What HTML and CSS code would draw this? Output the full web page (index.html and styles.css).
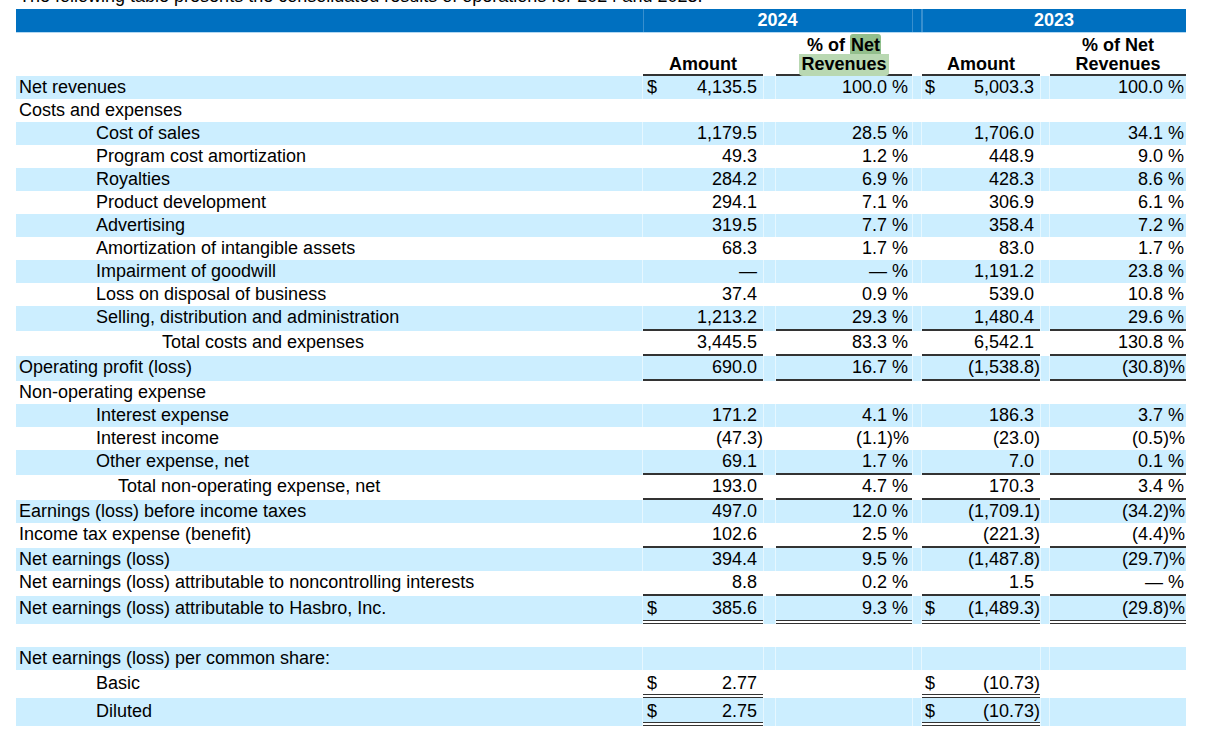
FILE: index.html
```html
<!DOCTYPE html>
<html lang="en">
<head>
<meta charset="utf-8">
<title>Consolidated results of operations</title>
<link rel="stylesheet" href="styles.css">
</head>
<body>
<div class="page">
  <p class="intro">The following table presents the consolidated results of operations for 2024 and 2023.</p>
  <table class="fin">
    <colgroup>
      <col class="w-label"><col class="w-cur1"><col class="w-amt1"><col class="w-rp"><col class="w-gap1"><col class="w-pv1"><col class="w-ps1"><col class="w-gap2"><col class="w-cur2"><col class="w-amt2"><col class="w-rp"><col class="w-gap2"><col class="w-pv2"><col class="w-ps2">
    </colgroup>
    <thead>
      <tr class="yr">
        <th class="lb"></th>
        <th colspan="6" class="yl">2024</th>
        <th class="g"></th>
        <th colspan="6" class="yl">2023</th>
      </tr>
      <tr class="hd">
        <th class="lb"></th>
        <th colspan="3" class="ub">Amount</th>
        <th class="g"></th>
        <th colspan="2" class="ub">% of <span class="hl-a">Net</span><br><span class="hl-b">Revenues</span></th>
        <th class="g"></th>
        <th colspan="3" class="ub">Amount</th>
        <th class="g"></th>
        <th colspan="2" class="ub">% of Net<br>Revenues</th>
      </tr>
    </thead>
    <tbody>
      <tr class="alt"><td class="lb">Net revenues</td><td class="cur">$</td><td class="amt">4,135.5</td><td class="rp"></td><td class="g"></td><td class="pv">100.0</td><td class="ps">&nbsp;%</td><td class="g"></td><td class="cur c2">$</td><td class="amt">5,003.3</td><td class="rp"></td><td class="g"></td><td class="pv">100.0</td><td class="ps">&nbsp;%</td></tr>
      <tr><td class="lb">Costs and expenses</td><td class="cur"></td><td class="amt"></td><td class="rp"></td><td class="g"></td><td class="pv"></td><td class="ps"></td><td class="g"></td><td class="cur c2"></td><td class="amt"></td><td class="rp"></td><td class="g"></td><td class="pv"></td><td class="ps"></td></tr>
      <tr class="alt"><td class="lb i1">Cost of sales</td><td class="cur"></td><td class="amt">1,179.5</td><td class="rp"></td><td class="g"></td><td class="pv">28.5</td><td class="ps">&nbsp;%</td><td class="g"></td><td class="cur c2"></td><td class="amt">1,706.0</td><td class="rp"></td><td class="g"></td><td class="pv">34.1</td><td class="ps">&nbsp;%</td></tr>
      <tr><td class="lb i1">Program cost amortization</td><td class="cur"></td><td class="amt">49.3</td><td class="rp"></td><td class="g"></td><td class="pv">1.2</td><td class="ps">&nbsp;%</td><td class="g"></td><td class="cur c2"></td><td class="amt">448.9</td><td class="rp"></td><td class="g"></td><td class="pv">9.0</td><td class="ps">&nbsp;%</td></tr>
      <tr class="alt"><td class="lb i1">Royalties</td><td class="cur"></td><td class="amt">284.2</td><td class="rp"></td><td class="g"></td><td class="pv">6.9</td><td class="ps">&nbsp;%</td><td class="g"></td><td class="cur c2"></td><td class="amt">428.3</td><td class="rp"></td><td class="g"></td><td class="pv">8.6</td><td class="ps">&nbsp;%</td></tr>
      <tr><td class="lb i1">Product development</td><td class="cur"></td><td class="amt">294.1</td><td class="rp"></td><td class="g"></td><td class="pv">7.1</td><td class="ps">&nbsp;%</td><td class="g"></td><td class="cur c2"></td><td class="amt">306.9</td><td class="rp"></td><td class="g"></td><td class="pv">6.1</td><td class="ps">&nbsp;%</td></tr>
      <tr class="alt"><td class="lb i1">Advertising</td><td class="cur"></td><td class="amt">319.5</td><td class="rp"></td><td class="g"></td><td class="pv">7.7</td><td class="ps">&nbsp;%</td><td class="g"></td><td class="cur c2"></td><td class="amt">358.4</td><td class="rp"></td><td class="g"></td><td class="pv">7.2</td><td class="ps">&nbsp;%</td></tr>
      <tr><td class="lb i1">Amortization of intangible assets</td><td class="cur"></td><td class="amt">68.3</td><td class="rp"></td><td class="g"></td><td class="pv">1.7</td><td class="ps">&nbsp;%</td><td class="g"></td><td class="cur c2"></td><td class="amt">83.0</td><td class="rp"></td><td class="g"></td><td class="pv">1.7</td><td class="ps">&nbsp;%</td></tr>
      <tr class="alt"><td class="lb i1">Impairment of goodwill</td><td class="cur"></td><td class="amt">—</td><td class="rp"></td><td class="g"></td><td class="pv">—</td><td class="ps">&nbsp;%</td><td class="g"></td><td class="cur c2"></td><td class="amt">1,191.2</td><td class="rp"></td><td class="g"></td><td class="pv">23.8</td><td class="ps">&nbsp;%</td></tr>
      <tr><td class="lb i1">Loss on disposal of business</td><td class="cur"></td><td class="amt">37.4</td><td class="rp"></td><td class="g"></td><td class="pv">0.9</td><td class="ps">&nbsp;%</td><td class="g"></td><td class="cur c2"></td><td class="amt">539.0</td><td class="rp"></td><td class="g"></td><td class="pv">10.8</td><td class="ps">&nbsp;%</td></tr>
      <tr class="alt ul"><td class="lb i1">Selling, distribution and administration</td><td class="cur"></td><td class="amt">1,213.2</td><td class="rp"></td><td class="g"></td><td class="pv">29.3</td><td class="ps">&nbsp;%</td><td class="g"></td><td class="cur c2"></td><td class="amt">1,480.4</td><td class="rp"></td><td class="g"></td><td class="pv">29.6</td><td class="ps">&nbsp;%</td></tr>
      <tr class="ul"><td class="lb i2">Total costs and expenses</td><td class="cur"></td><td class="amt">3,445.5</td><td class="rp"></td><td class="g"></td><td class="pv">83.3</td><td class="ps">&nbsp;%</td><td class="g"></td><td class="cur c2"></td><td class="amt">6,542.1</td><td class="rp"></td><td class="g"></td><td class="pv">130.8</td><td class="ps">&nbsp;%</td></tr>
      <tr class="alt ul"><td class="lb">Operating profit (loss)</td><td class="cur"></td><td class="amt">690.0</td><td class="rp"></td><td class="g"></td><td class="pv">16.7</td><td class="ps">&nbsp;%</td><td class="g"></td><td class="cur c2"></td><td class="amt">(1,538.8</td><td class="rp">)</td><td class="g"></td><td class="pv">(30.8</td><td class="ps">)%</td></tr>
      <tr><td class="lb">Non-operating expense</td><td class="cur"></td><td class="amt"></td><td class="rp"></td><td class="g"></td><td class="pv"></td><td class="ps"></td><td class="g"></td><td class="cur c2"></td><td class="amt"></td><td class="rp"></td><td class="g"></td><td class="pv"></td><td class="ps"></td></tr>
      <tr class="alt"><td class="lb i1">Interest expense</td><td class="cur"></td><td class="amt">171.2</td><td class="rp"></td><td class="g"></td><td class="pv">4.1</td><td class="ps">&nbsp;%</td><td class="g"></td><td class="cur c2"></td><td class="amt">186.3</td><td class="rp"></td><td class="g"></td><td class="pv">3.7</td><td class="ps">&nbsp;%</td></tr>
      <tr><td class="lb i1">Interest income</td><td class="cur"></td><td class="amt">(47.3</td><td class="rp">)</td><td class="g"></td><td class="pv">(1.1</td><td class="ps">)%</td><td class="g"></td><td class="cur c2"></td><td class="amt">(23.0</td><td class="rp">)</td><td class="g"></td><td class="pv">(0.5</td><td class="ps">)%</td></tr>
      <tr class="alt ul"><td class="lb i1">Other expense, net</td><td class="cur"></td><td class="amt">69.1</td><td class="rp"></td><td class="g"></td><td class="pv">1.7</td><td class="ps">&nbsp;%</td><td class="g"></td><td class="cur c2"></td><td class="amt">7.0</td><td class="rp"></td><td class="g"></td><td class="pv">0.1</td><td class="ps">&nbsp;%</td></tr>
      <tr class="ul"><td class="lb i3">Total non-operating expense, net</td><td class="cur"></td><td class="amt">193.0</td><td class="rp"></td><td class="g"></td><td class="pv">4.7</td><td class="ps">&nbsp;%</td><td class="g"></td><td class="cur c2"></td><td class="amt">170.3</td><td class="rp"></td><td class="g"></td><td class="pv">3.4</td><td class="ps">&nbsp;%</td></tr>
      <tr class="alt"><td class="lb">Earnings (loss) before income taxes</td><td class="cur"></td><td class="amt">497.0</td><td class="rp"></td><td class="g"></td><td class="pv">12.0</td><td class="ps">&nbsp;%</td><td class="g"></td><td class="cur c2"></td><td class="amt">(1,709.1</td><td class="rp">)</td><td class="g"></td><td class="pv">(34.2</td><td class="ps">)%</td></tr>
      <tr class="ul"><td class="lb">Income tax expense (benefit)</td><td class="cur"></td><td class="amt">102.6</td><td class="rp"></td><td class="g"></td><td class="pv">2.5</td><td class="ps">&nbsp;%</td><td class="g"></td><td class="cur c2"></td><td class="amt">(221.3</td><td class="rp">)</td><td class="g"></td><td class="pv">(4.4</td><td class="ps">)%</td></tr>
      <tr class="alt"><td class="lb">Net earnings (loss)</td><td class="cur"></td><td class="amt">394.4</td><td class="rp"></td><td class="g"></td><td class="pv">9.5</td><td class="ps">&nbsp;%</td><td class="g"></td><td class="cur c2"></td><td class="amt">(1,487.8</td><td class="rp">)</td><td class="g"></td><td class="pv">(29.7</td><td class="ps">)%</td></tr>
      <tr class="ul"><td class="lb">Net earnings (loss) attributable to noncontrolling interests</td><td class="cur"></td><td class="amt">8.8</td><td class="rp"></td><td class="g"></td><td class="pv">0.2</td><td class="ps">&nbsp;%</td><td class="g"></td><td class="cur c2"></td><td class="amt">1.5</td><td class="rp"></td><td class="g"></td><td class="pv">—</td><td class="ps">&nbsp;%</td></tr>
      <tr class="alt dul tot"><td class="lb">Net earnings (loss) attributable to Hasbro, Inc.</td><td class="cur">$</td><td class="amt">385.6</td><td class="rp"></td><td class="g"></td><td class="pv">9.3</td><td class="ps">&nbsp;%</td><td class="g"></td><td class="cur c2">$</td><td class="amt">(1,489.3</td><td class="rp">)</td><td class="g"></td><td class="pv">(29.8</td><td class="ps">)%</td></tr>
      <tr><td class="lb">&nbsp;</td><td class="cur"></td><td class="amt"></td><td class="rp"></td><td class="g"></td><td class="pv"></td><td class="ps"></td><td class="g"></td><td class="cur c2"></td><td class="amt"></td><td class="rp"></td><td class="g"></td><td class="pv"></td><td class="ps"></td></tr>
      <tr class="alt"><td class="lb">Net earnings (loss) per common share:</td><td class="cur"></td><td class="amt"></td><td class="rp"></td><td class="g"></td><td class="pv"></td><td class="ps"></td><td class="g"></td><td class="cur c2"></td><td class="amt"></td><td class="rp"></td><td class="g"></td><td class="pv"></td><td class="ps"></td></tr>
      <tr class="dua eps"><td class="lb i1">Basic</td><td class="cur">$</td><td class="amt">2.77</td><td class="rp"></td><td class="g"></td><td class="pv"></td><td class="ps"></td><td class="g"></td><td class="cur c2">$</td><td class="amt">(10.73</td><td class="rp">)</td><td class="g"></td><td class="pv"></td><td class="ps"></td></tr>
      <tr class="alt dua eps"><td class="lb i1">Diluted</td><td class="cur">$</td><td class="amt">2.75</td><td class="rp"></td><td class="g"></td><td class="pv"></td><td class="ps"></td><td class="g"></td><td class="cur c2">$</td><td class="amt">(10.73</td><td class="rp">)</td><td class="g"></td><td class="pv"></td><td class="ps"></td></tr>
    </tbody>
  </table>
</div>
</body>
</html>
```

FILE: styles.css
```css
* { box-sizing: border-box; }
html, body { margin: 0; padding: 0; background: #ffffff; }
body {
  font-family: "Liberation Sans", Arial, sans-serif;
  font-size: 18px;
  color: #000000;
  overflow: hidden;
}
.page { padding: 0 20px 0 16px; }
.intro {
  margin: -14px 0 3px 3px;
  line-height: 20px;
  white-space: nowrap;
}

table.fin {
  border-collapse: separate;
  border-spacing: 0;
  table-layout: fixed;
  width: 1170px;
}
.w-label { width: 627px; }
.w-cur1 { width: 17px; }
.w-amt1 { width: 97px; }
.w-rp { width: 6px; }
.w-gap1 { width: 13px; }
.w-pv1 { width: 111px; }
.w-ps1 { width: 25px; }
.w-gap2 { width: 10px; }
.w-cur2 { width: 16px; }
.w-amt2 { width: 96px; }
.w-pv2 { width: 113px; }
.w-ps2 { width: 23px; }

th, td {
  padding: 0;
  white-space: nowrap;
  overflow: visible;
  background-clip: padding-box;
}

/* year header */
.yr th {
  background: #0070c0;
  color: #ffffff;
  font-weight: bold;
  line-height: 23px;
  height: 24px;
  border-bottom: 1px solid #b3d8f2;
  text-align: center;
  vertical-align: top;
}
.yr th.yl { box-shadow: inset 1px 0 0 rgba(255, 255, 255, 0.22); }
.yr th.g { box-shadow: inset 1px 0 0 rgba(255, 255, 255, 0.22), inset -1px 0 0 rgba(255, 255, 255, 0.22); }

/* column header */
.hd th {
  font-weight: bold;
  line-height: 19px;
  padding-top: 3px;
  text-align: center;
  vertical-align: bottom;
}
.hd th.ub { border-bottom: 2px solid #333333; }
.hl-a {
  background: #93bf8c;
  border-radius: 3px;
  padding: 1px 1px 2px;
}
.hl-b {
  background: #b9d8b2;
  border-radius: 0 0 4px 4px;
  padding: 0 2px 2px;
}

/* body rows */
tbody td {
  line-height: 23px;
  vertical-align: top;
}
tbody tr.alt td { background-color: #cceeff; }
tbody tr.alt td.lb { box-shadow: inset -1px 0 0 rgba(255, 255, 255, 0.5); }
tbody tr.alt td.g { box-shadow: inset 1px 0 0 rgba(255, 255, 255, 0.5), inset -1px 0 0 rgba(255, 255, 255, 0.5); }

.lb { padding-left: 3px; text-align: left; }
.lb.i1 { padding-left: 80px; }
.lb.i2 { padding-left: 146px; }
.lb.i3 { padding-left: 102px; }

.cur { text-align: left; padding-left: 4px; }
.cur.c2 { padding-left: 3px; }
.amt { text-align: right; }
.rp { text-align: left; overflow: visible; }
.pv { text-align: right; }
.ps { text-align: left; }

/* underlines */
tr.ul td.cur, tr.ul td.amt, tr.ul td.rp, tr.ul td.pv, tr.ul td.ps {
  border-bottom: 2px solid #333333;
}
tr.dul td.cur, tr.dul td.amt, tr.dul td.rp, tr.dul td.pv, tr.dul td.ps {
  border-bottom: 4px double #333333;
}
tr.dua td.cur, tr.dua td.amt, tr.dua td.rp {
  border-bottom: 4px double #333333;
}
tr.tot td { padding-top: 1px; }
tr.eps td { padding-top: 3px; line-height: 21px; }
```
